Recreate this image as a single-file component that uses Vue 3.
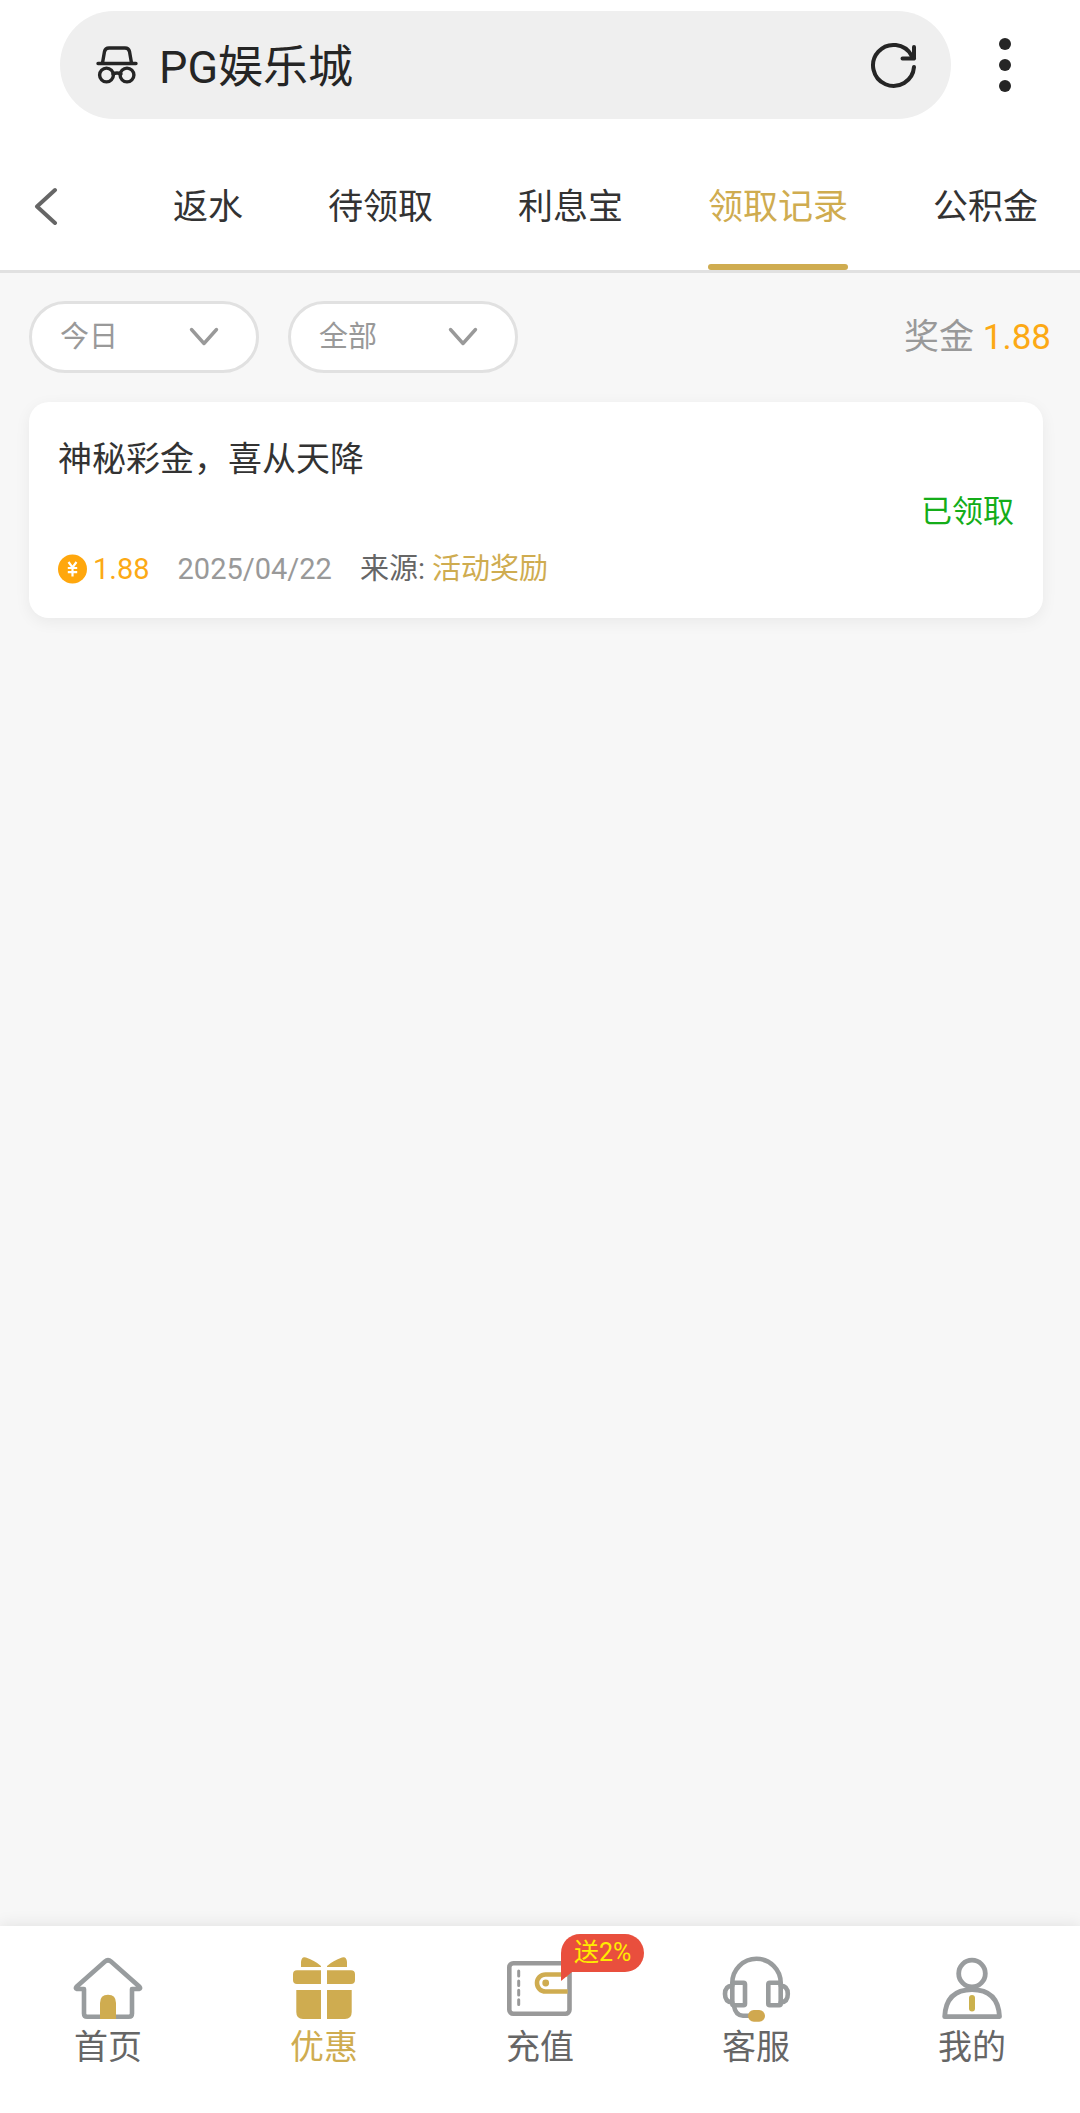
<script setup>
import { ref } from 'vue'

const tabs = ['返水', '待领取', '利息宝', '领取记录', '公积金']
const activeTab = ref('领取记录')

const period = ref('今日')
const kind = ref('全部')

const records = [
  { title: '神秘彩金，喜从天降', amount: '1.88', date: '2025/04/22', source: '活动奖励', status: '已领取' },
]
</script>

<template>
  <div class="page" lang="zh-CN">
    <header class="browser">
      <div class="address">
        <svg class="incognito" viewBox="0 0 42 40" fill="none" stroke="#252525" stroke-width="3.4" stroke-linecap="round" stroke-linejoin="round" aria-hidden="true">
          <path d="M2 18.500H40M6.500 18L8.500 6.500Q9.300 3 13 3H29Q32.700 3 33.500 6.500L35.500 18M17 29Q21 27 25 29" />
          <circle cx="10.500" cy="30" r="6.900" />
          <circle cx="31" cy="30" r="6.900" />
        </svg>
        <span class="site">PG娱乐城</span>
        <button class="icon-button" type="button" aria-label="刷新">
          <svg width="50" height="50" viewBox="0 0 50 50" fill="none" stroke="#252525" stroke-width="4" stroke-linecap="round" stroke-linejoin="round">
            <path d="M45 27A20.500 20.500 0 1 1 42.500 15.500L45 18.500M45 7V18.500H33.500" />
          </svg>
        </button>
      </div>
      <button class="icon-button menu" type="button" aria-label="菜单">
        <svg width="12" height="54" viewBox="0 0 12 54" fill="#252525">
          <circle cx="6" cy="6" r="6" />
          <circle cx="6" cy="27" r="6" />
          <circle cx="6" cy="48" r="6" />
        </svg>
      </button>
    </header>

    <nav class="tabs">
      <button class="icon-button" type="button" aria-label="返回">
        <svg width="24" height="38" viewBox="0 0 24 38" fill="none" stroke="#666" stroke-width="4" stroke-linecap="round" stroke-linejoin="round">
          <path d="M21 3L3 19.500L21 36" />
        </svg>
      </button>
      <div class="tab-list">
        <button
          v-for="tab in tabs"
          :key="tab"
          type="button"
          class="tab"
          :class="{ active: tab === activeTab }"
          @click="activeTab = tab"
        >{{ tab }}</button>
      </div>
    </nav>

    <main class="content">
      <div class="filters">
        <label class="filter">
          <select v-model="period" aria-label="日期">
            <option>今日</option>
          </select>
          <svg class="chevron" viewBox="0 0 30 20" fill="none" stroke="#999" stroke-width="3.4" stroke-linecap="round" stroke-linejoin="round" aria-hidden="true">
            <path d="M2.500 2.500L15 16.500L27.500 2.500" />
          </svg>
        </label>
        <label class="filter">
          <select v-model="kind" aria-label="类型">
            <option>全部</option>
          </select>
          <svg class="chevron" viewBox="0 0 30 20" fill="none" stroke="#999" stroke-width="3.4" stroke-linecap="round" stroke-linejoin="round" aria-hidden="true">
            <path d="M2.500 2.500L15 16.500L27.500 2.500" />
          </svg>
        </label>
        <p class="total">奖金 <b>1.88</b></p>
      </div>

      <article v-for="record in records" :key="record.title" class="card">
        <div class="details">
          <h2>{{ record.title }}</h2>
          <div class="meta">
            <span class="amount">
              <svg width="29" height="30" viewBox="0 0 29 30" aria-hidden="true">
                <circle cx="14.500" cy="15" r="14.500" fill="#ffa70d" />
                <path d="M10.500 8L14.500 13.500L18.500 8M14.500 13.500V22.500M9.800 14H19.200M9.800 18.200H19.200" fill="none" stroke="#fff" stroke-width="2.200" />
              </svg>
              {{ record.amount }}
            </span>
            <time>{{ record.date }}</time>
            <span class="source">来源: <a href="#">{{ record.source }}</a></span>
          </div>
        </div>
        <span class="status">{{ record.status }}</span>
      </article>
    </main>

    <nav class="bottom-nav">
      <a href="#">
        <svg viewBox="0 0 72 72" fill="none" aria-hidden="true">
          <path d="M12 36V60.500Q12 63.700 15.200 63.700H56.800Q60 63.700 60 60.500V36H67Q69 35.500 67.500 33.800L39 8.500Q36 6 33 8.500L4.500 33.800Q3 35.500 5 36Z" stroke="#989c9e" stroke-width="4.600" stroke-linejoin="round" />
          <path d="M28 66V50Q28 41.700 36 41.700Q44 41.700 44 50V66Z" fill="#cfac50" />
        </svg>
        首页
      </a>
      <a href="#" class="active">
        <svg viewBox="0 0 72 72" fill="#cfac50" aria-hidden="true">
          <path d="M13 14V9Q13.500 3 18 4.500Q27 7.500 33 13V14ZM59 14V9Q58.500 3 54 4.500Q45 7.500 39 13V14Z" />
          <path d="M33 17.300V31H9Q5 31 5 27V21.300Q5 17.300 9 17.300ZM39 17.300V31H63Q67 31 67 27V21.300Q67 17.300 63 17.300Z" />
          <path d="M33 37V66H15Q8.300 66 8.300 59V37ZM39 37V66H57Q63.700 66 63.700 59V37Z" />
        </svg>
        优惠
      </a>
      <a href="#">
        <svg viewBox="0 0 72 72" fill="none" stroke="#999" stroke-width="4.600" aria-hidden="true">
          <rect x="5.300" y="10.300" width="60.200" height="50.400" rx="4" />
          <path d="M14.700 18V23M14.700 28V32.500M14.700 37.300V42M14.700 46.700V51.500" stroke-width="3" stroke-linecap="round" />
          <path d="M63.700 21.500H41.500A8.500 8.500 0 0 0 41.500 38.500H63.700" stroke="#cfac50" />
          <circle cx="41.700" cy="30" r="3.400" fill="#cfac50" stroke="none" />
        </svg>
        充值
        <span class="badge">送2%</span>
      </a>
      <a href="#">
        <svg viewBox="0 0 72 72" fill="none" stroke="#999c9d" stroke-width="4.600" stroke-linecap="round" stroke-linejoin="round" aria-hidden="true">
          <path d="M12.300 30A24.200 24.200 0 0 1 60.700 30" />
          <rect x="12.300" y="29.700" width="12.700" height="22.600" rx="1.500" />
          <rect x="48.300" y="29.700" width="12.400" height="22.600" rx="1.500" />
          <path d="M12.300 32.500Q5 33 5 41Q5 49 12.300 49.500M60.700 32.500Q67.800 33 67.800 41Q67.800 49 60.700 49.500M14 53Q15.500 62.500 23 62.700H29" />
          <rect x="28" y="57" width="17" height="11.700" rx="5.800" fill="#d0a84f" stroke="none" />
        </svg>
        客服
      </a>
      <a href="#">
        <svg viewBox="0 0 72 72" fill="none" stroke="#999c9e" stroke-width="4.800" stroke-linejoin="round" aria-hidden="true">
          <circle cx="36" cy="20.500" r="13.300" />
          <path d="M8.700 63.700Q10 36.700 36 36.700Q62 36.700 63.500 63.700Z" />
          <path d="M36 45V55.500" stroke="#cbb14d" stroke-width="6" stroke-linecap="round" />
        </svg>
        我的
      </a>
    </nav>
  </div>
</template>

<style>
body {
  margin: 0;
}
</style>

<style scoped>
.page {
  display: flex;
  flex-direction: column;
  min-height: 100vh;
  background: #f7f7f7;
  color: #333;
  font-family: Roboto, "Noto Sans CJK SC", sans-serif;
  font-size: 35px;
}

button,
select {
  margin: 0;
  padding: 0;
  border: 0;
  background: none;
  color: inherit;
  font: inherit;
}

a {
  color: inherit;
  text-decoration: none;
}

svg {
  display: block;
}

.icon-button {
  display: flex;
  align-items: center;
  justify-content: center;
}

.browser {
  display: flex;
  align-items: center;
  padding: 11px 69px 23px 60px;
  background: #fff;
}

.address {
  display: flex;
  flex: 1;
  align-items: center;
  box-sizing: border-box;
  height: 108px;
  padding: 0 32px 0 36px;
  border-radius: 54px;
  background: #efefef;
  color: #252525;
  font-size: 45px;
}

.incognito {
  width: 42px;
  height: 40px;
}

.site {
  flex: 1;
  margin-left: 21px;
  padding-bottom: 4px;
}

.menu {
  margin-left: 48px;
}

.tabs {
  display: flex;
  align-items: stretch;
  justify-content: space-between;
  height: 128px;
  padding: 0 42px 0 34px;
  border-bottom: 3px solid #e1e1e1;
  background: #fff;
}

.tab-list {
  display: flex;
  gap: 85px;
}

.tab {
  position: relative;
  padding-bottom: 6px;
  white-space: nowrap;
}

.tab.active {
  color: #cfac50;
}

.tab.active::after {
  content: "";
  position: absolute;
  right: 0;
  bottom: 0;
  left: 0;
  height: 6px;
  border-radius: 3px;
  background: #cfac50;
}

.content {
  flex: 1;
  padding: 28px 29px;
}

.filters {
  display: flex;
  align-items: center;
  gap: 29px;
}

.filter {
  display: grid;
  align-items: center;
  box-sizing: border-box;
  width: 230px;
  height: 72px;
  border: 3px solid #e1e1e1;
  border-radius: 36px;
  background: #fff;
  color: #999;
  font-size: 29px;
}

.filter select {
  grid-area: 1 / 1;
  height: 66px;
  padding-left: 28px;
  appearance: none;
}

.chevron {
  grid-area: 1 / 1;
  justify-self: end;
  width: 30px;
  height: 20px;
  margin-right: 37px;
  pointer-events: none;
}

.total {
  margin: 0 0 0 auto;
  padding-bottom: 8px;
  color: #999;
}

.total b {
  color: #fca915;
  font-weight: 400;
}

.card {
  display: flex;
  align-items: center;
  justify-content: space-between;
  box-sizing: border-box;
  height: 216px;
  margin: 29px 8px 0 0;
  padding: 0 29px;
  border-radius: 20px;
  background: #fff;
  box-shadow: 0 4px 16px rgba(0, 0, 0, 0.06);
}

.details {
  display: flex;
  flex-direction: column;
  gap: 60px;
  padding-top: 8px;
}

h2 {
  margin: 0;
  font-size: 34px;
  font-weight: 400;
  line-height: 50px;
}

.meta {
  display: flex;
  gap: 28px;
  color: #999;
  font-size: 29px;
  line-height: 50px;
}

.amount {
  display: flex;
  align-items: center;
  gap: 6px;
  color: #fca915;
}

.source {
  color: #666;
}

.source a {
  color: #cfac50;
}

.status {
  padding-bottom: 4px;
  color: #14ad19;
  font-size: 31px;
}

.bottom-nav {
  display: flex;
  height: 160px;
  padding-top: 27px;
  background: #fff;
  box-shadow: 0 0 16px rgba(0, 0, 0, 0.1);
}

.bottom-nav a {
  position: relative;
  display: flex;
  flex: 1;
  flex-direction: column;
  align-items: center;
  color: #666;
  font-size: 34px;
  line-height: 44px;
}

.bottom-nav a.active {
  color: #cfac50;
}

.bottom-nav svg {
  width: 72px;
  height: 72px;
}

.badge {
  position: absolute;
  top: -19px;
  left: calc(50% + 21px);
  padding: 0 13px;
  border-radius: 19px 19px 19px 0;
  background: #e94f3d;
  color: #ffeb00;
  font-size: 25px;
  line-height: 38px;
  white-space: nowrap;
}

.badge::after {
  content: "";
  position: absolute;
  top: 100%;
  left: 0;
  border-top: 9px solid #e94f3d;
  border-right: 11px solid transparent;
}
</style>
